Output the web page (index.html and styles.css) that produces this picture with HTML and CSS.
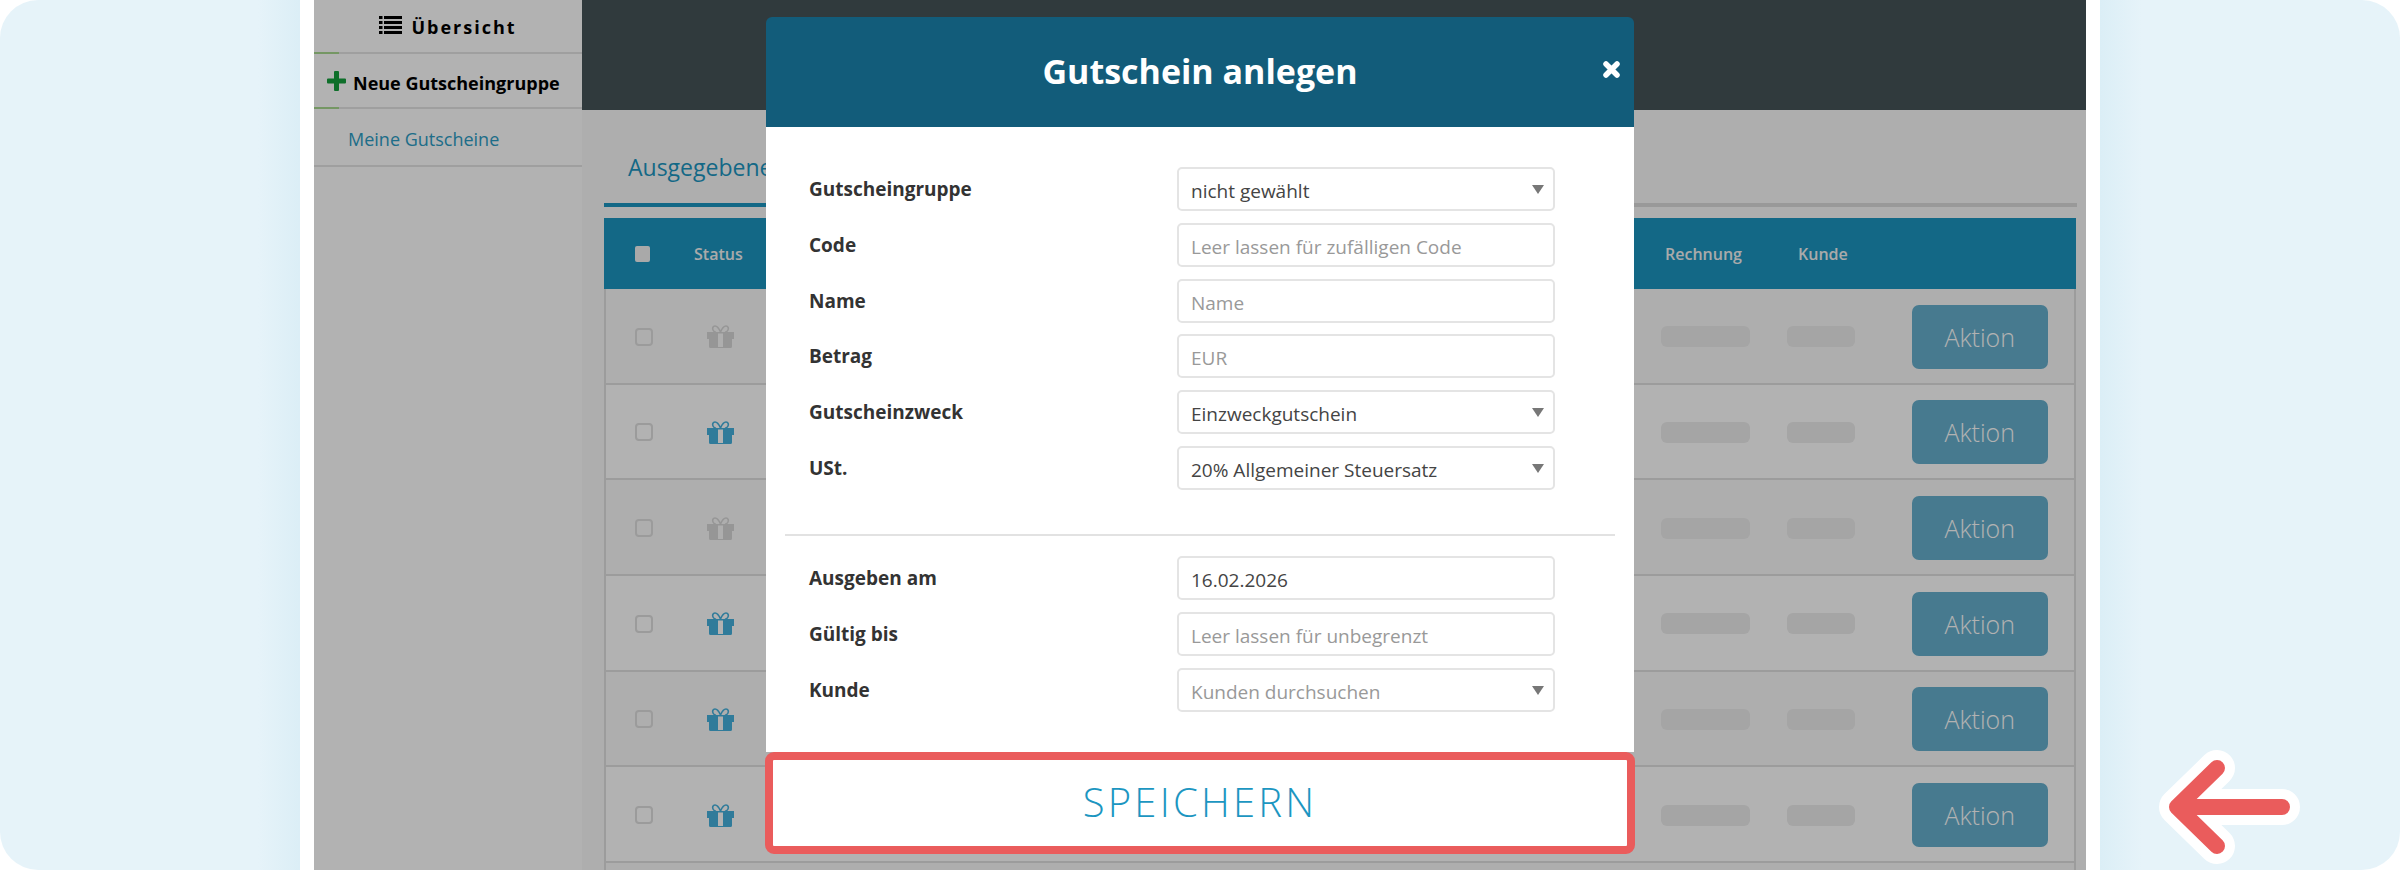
FILE: index.html
```html
<!DOCTYPE html>
<html lang="de">
<head>
    <meta charset="UTF-8">
    <title>Gutschein anlegen</title>
    <link rel="stylesheet" href="styles.css">
</head>
<body>

    <svg class="defs" width="0" height="0">
        <symbol id="gift" viewBox="0 0 27 23">
            <path fill-rule="evenodd" d="M0 7h27v7h-2v7.500a1.500 1.500 0 0 1-1.500 1.500h-20A1.500 1.500 0 0 1 2 21.500V14H0zM11 8.500V22h5V8.500z" fill="currentColor"/>
            <path d="M13.500 7C12 3.500 10 1 8 1 5.800 1 5.200 3.200 6 5c.6 1.300 1.800 2 3 2.300M13.500 7C15 3.500 17 1 19 1c2.200 0 2.800 2.200 2 4-.6 1.300-1.800 2-3 2.300" fill="none" stroke="currentColor" stroke-width="1.600"/>
        </symbol>
    </svg>

    <div class="side-panel side-left"></div>

    <div class="frame">
        <aside class="sidebar">
            <div class="side-head">
                <svg class="list-icon" viewBox="0 0 23 18"><path d="M0 0h3.500v3H0zM5 0h18v3H5zM0 5h3.500v3H0zM5 5h18v3H5zM0 10h3.500v3H0zM5 10h18v3H5zM0 15h3.500v3H0zM5 15h18v3H5z" fill="currentColor"/></svg>
                <span>Übersicht</span>
            </div>
            <div class="side-new">
                <svg class="plus-icon" viewBox="0 0 19 20"><path d="M7 1a1 1 0 0 1 1-1h3a1 1 0 0 1 1 1v6.500h6a1 1 0 0 1 1 1v3a1 1 0 0 1-1 1h-6V19a1 1 0 0 1-1 1H8a1 1 0 0 1-1-1v-6.500H1a1 1 0 0 1-1-1v-3a1 1 0 0 1 1-1h6z" fill="currentColor"/></svg>
                <span>Neue Gutscheingruppe</span>
            </div>
            <div class="side-link">Meine Gutscheine</div>
        </aside>

        <main class="content">
            <div class="topbar"></div>
            <div class="inner">
                <div class="tabs">
                    <div class="tab">Ausgegebene</div>
                </div>
                <div class="table">
                    <div class="row table-head">
                        <div class="cell-check"><span class="check-all"></span></div>
                        <div>Status</div>
                        <div class="th-invoice">Rechnung</div>
                        <div class="th-customer">Kunde</div>
                        <div></div>
                    </div>
                    <div class="row">
                        <div class="cell-check"><span class="check"></span></div>
                        <div><svg class="gift gift-off"><use href="#gift"/></svg></div>
                        <div><span class="pill pill-wide"></span></div>
                        <div><span class="pill"></span></div>
                        <div class="action-btn">Aktion</div>
                    </div>
                    <div class="row">
                        <div class="cell-check"><span class="check"></span></div>
                        <div><svg class="gift"><use href="#gift"/></svg></div>
                        <div><span class="pill pill-wide"></span></div>
                        <div><span class="pill"></span></div>
                        <div class="action-btn">Aktion</div>
                    </div>
                    <div class="row">
                        <div class="cell-check"><span class="check"></span></div>
                        <div><svg class="gift gift-off"><use href="#gift"/></svg></div>
                        <div><span class="pill pill-wide"></span></div>
                        <div><span class="pill"></span></div>
                        <div class="action-btn">Aktion</div>
                    </div>
                    <div class="row">
                        <div class="cell-check"><span class="check"></span></div>
                        <div><svg class="gift"><use href="#gift"/></svg></div>
                        <div><span class="pill pill-wide"></span></div>
                        <div><span class="pill"></span></div>
                        <div class="action-btn">Aktion</div>
                    </div>
                    <div class="row">
                        <div class="cell-check"><span class="check"></span></div>
                        <div><svg class="gift"><use href="#gift"/></svg></div>
                        <div><span class="pill pill-wide"></span></div>
                        <div><span class="pill"></span></div>
                        <div class="action-btn">Aktion</div>
                    </div>
                    <div class="row">
                        <div class="cell-check"><span class="check"></span></div>
                        <div><svg class="gift"><use href="#gift"/></svg></div>
                        <div><span class="pill pill-wide"></span></div>
                        <div><span class="pill"></span></div>
                        <div class="action-btn">Aktion</div>
                    </div>
                </div>
            </div>
        </main>

        <!-- Dimmed layer and dialog -->
        <div class="overlay">
            <div class="modal">
                <div class="modal-head">
                    <h2>Gutschein anlegen</h2>
                    <svg class="close-icon" viewBox="0 0 17 17"><path d="M3 3l11 11M14 3L3 14" stroke="currentColor" stroke-width="5.500" stroke-linecap="round"/></svg>
                </div>
                <div class="modal-body">
                    <div class="form-group">
                        <div class="form-row">
                            <label>Gutscheingruppe</label>
                            <div class="field field-select">nicht gewählt</div>
                        </div>
                        <div class="form-row">
                            <label>Code</label>
                            <div class="field field-hint">Leer lassen für zufälligen Code</div>
                        </div>
                        <div class="form-row">
                            <label>Name</label>
                            <div class="field field-hint">Name</div>
                        </div>
                        <div class="form-row">
                            <label>Betrag</label>
                            <div class="field field-hint">EUR</div>
                        </div>
                        <div class="form-row">
                            <label>Gutscheinzweck</label>
                            <div class="field field-select">Einzweckgutschein</div>
                        </div>
                        <div class="form-row">
                            <label>USt.</label>
                            <div class="field field-select">20% Allgemeiner Steuersatz</div>
                        </div>
                    </div>
                    <hr class="divider">
                    <div class="form-group">
                        <div class="form-row">
                            <label>Ausgeben am</label>
                            <div class="field">16.02.2026</div>
                        </div>
                        <div class="form-row">
                            <label>Gültig bis</label>
                            <div class="field field-hint">Leer lassen für unbegrenzt</div>
                        </div>
                        <div class="form-row">
                            <label>Kunde</label>
                            <div class="field field-hint field-select">Kunden durchsuchen</div>
                        </div>
                    </div>
                </div>
                <button class="save-btn">SPEICHERN</button>
            </div>
        </div>
    </div>

    <div class="side-panel side-right">
        <svg class="arrow" viewBox="0 0 160 130" width="160" height="130">
            <path class="arrow-halo" d="M132 57H27M67 18L27 57l40 39"/>
            <path class="arrow-line" d="M132 57H27M67 18L27 57l40 39"/>
        </svg>
    </div>

</body>
</html>
```

FILE: styles.css
```css
/* General Styles */
* {
    box-sizing: border-box;
}

body {
    margin: 0;
    width: 2400px;
    height: 870px;
    overflow: hidden;
    display: flex;
    background-color: #fff;
    font-family: "Open Sans", "Liberation Sans", sans-serif;
}

.defs {
    position: absolute;
}

/* Light panels left and right */
.side-panel {
    position: relative;
    width: 300px;
    height: 870px;
}

.side-left {
    background: linear-gradient(to right, #e6f3f9 86%, #dbeef6);
    border-radius: 38px 0 0 38px;
}

.side-right {
    background: linear-gradient(to left, #e6f3f9 86%, #dbeef6);
    border-radius: 0 38px 38px 0;
}

.arrow {
    position: absolute;
    left: 50px;
    top: 750px;
}

.arrow path {
    fill: none;
    stroke-linecap: round;
    stroke-linejoin: round;
}

.arrow-halo {
    stroke: #fff;
    stroke-width: 36;
}

.arrow-line {
    stroke: #ea5c5c;
    stroke-width: 16;
}

/* App frame */
.frame {
    position: relative;
    width: 1800px;
    height: 870px;
    padding: 0 14px;
    display: flex;
    overflow: hidden;
}

.sidebar {
    width: 268px;
    flex-shrink: 0;
    background-color: #fff;
}

.side-head {
    height: 54px;
    padding-top: 2px;
    display: flex;
    align-items: center;
    justify-content: center;
    gap: 9px;
    border-bottom: 2px solid #e4e4e4;
    font-size: 18px;
    font-weight: 700;
    letter-spacing: 2px;
    color: #000;
}

.list-icon {
    width: 23px;
    height: 18px;
    margin-bottom: 4px;
}

.side-new {
    height: 55px;
    padding: 4px 0 0 13px;
    display: flex;
    align-items: center;
    gap: 7px;
    border-bottom: 2px solid #e4e4e4;
    font-size: 18px;
    font-weight: 700;
    color: #000;
}

.side-head, .side-new {
    position: relative;
}

.side-head::after, .side-new::after {
    content: "";
    position: absolute;
    left: 0;
    bottom: -2px;
    width: 25px;
    height: 2px;
    background-color: #a8d890;
}

.plus-icon {
    width: 19px;
    height: 20px;
    margin-top: -4px;
    color: #15a03d;
}

.side-link {
    height: 58px;
    padding: 3px 0 0 34px;
    display: flex;
    align-items: center;
    border-bottom: 2px solid #e4e4e4;
    font-size: 18px;
    color: #2b9cc4;
}

.content {
    flex: 1;
    background-color: #fafafa;
}

.topbar {
    height: 110px;
    background-color: #465358;
}

.inner {
    padding: 0 9px 0 22px;
}

/* Tabs */
.tabs {
    height: 97px;
    border-bottom: 4px solid #dcdcdc;
    display: flex;
    margin-bottom: 11px;
}

.tab {
    width: 300px;
    height: 97px;
    padding: 41px 0 0 24px;
    border-bottom: 4px solid #1c96c1;
    font-size: 23px;
    line-height: 32px;
    color: #1c96c1;
}

/* Table */
.table {
    width: 1472px;
    min-height: 700px;
    border-left: 2px solid #e0e0e0;
    border-right: 2px solid #e0e0e0;
}

.row {
    height: 95.67px;
    padding: 2px 26.5px 0 0;
    display: grid;
    grid-template-columns: 88px 1fr 126px 125px 135.5px;
    align-items: center;
    border-bottom: 2px solid #e0e0e0;
    background-color: #fafafa;
}

.row:nth-child(odd) {
    background-color: #fff;
}

.table-head {
    height: 71px;
    margin: 0 -2px;
    padding: 0 28.5px 0 0;
    grid-template-columns: 90px 1fr 126px 125px 135.5px;
    border-bottom: none;
    background: #1c96c1 !important;
    font-size: 16px;
    font-weight: 600;
    color: #f4f4f4;
}

.cell-check {
    padding-left: 29px;
    display: flex;
}

.check {
    width: 18px;
    height: 18px;
    border: 2px solid #dedede;
    border-radius: 4px;
}

.check-all {
    width: 15px;
    height: 16px;
    border-radius: 2px;
    background-color: #f2f2f2;
}

.table-head .cell-check {
    padding-left: 31px;
}

.th-invoice {
    padding-left: 4px;
}

.th-customer {
    padding-left: 11px;
}

.gift {
    display: block;
    width: 27px;
    height: 23px;
    margin-left: 13px;
    color: #45b1dd;
}

.gift-off {
    color: #d7d7d7;
}

.pill {
    display: block;
    width: 68px;
    height: 21px;
    border-radius: 6px;
    background-color: #ececec;
}

.pill-wide {
    width: 89px;
}

.action-btn {
    height: 64px;
    display: flex;
    align-items: center;
    justify-content: center;
    border-radius: 7px;
    background-color: #66afcd;
    font-size: 25px;
    font-weight: 300;
    color: #fff;
}

/* Dialog */
.overlay {
    position: absolute;
    left: 14px;
    right: 14px;
    top: 0;
    bottom: 0;
    display: flex;
    justify-content: center;
    align-items: flex-start;
    padding-top: 17px;
    background-color: rgba(0, 0, 0, 0.3);
}

.modal {
    width: 868px;
    border-radius: 6px;
}

.modal-head {
    position: relative;
    height: 110px;
    padding-bottom: 3px;
    display: flex;
    align-items: center;
    justify-content: center;
    border-radius: 6px 6px 0 0;
    background-color: #125c7a;
}

.modal-head h2 {
    margin: 0;
    font-size: 34px;
    font-weight: 700;
    color: #fff;
}

.close-icon {
    position: absolute;
    right: 14px;
    top: 44px;
    width: 17px;
    height: 17px;
    color: #fff;
}

.modal-body {
    padding: 40px 19px;
    background-color: #fff;
}

.form-group {
    display: flex;
    flex-direction: column;
    gap: 11.8px;
    padding-left: 24px;
}

.form-row {
    display: flex;
    align-items: center;
    height: 44px;
}

.form-row label {
    width: 368px;
    font-size: 19px;
    font-weight: 700;
    color: #333;
}

.field {
    position: relative;
    width: 378px;
    height: 44px;
    padding: 4px 12px 0;
    display: flex;
    align-items: center;
    border: 2px solid #e4e4e4;
    border-radius: 5px;
    font-size: 19px;
    color: #444;
}

.field-hint {
    color: #999;
}

.field-select::after {
    content: "";
    position: absolute;
    right: 9px;
    top: 16px;
    border-left: 6px solid transparent;
    border-right: 6px solid transparent;
    border-top: 9px solid #777;
}

.divider {
    height: 2px;
    margin: 44px 0 20px;
    border: none;
    background-color: #e2e2e2;
}

.save-btn {
    display: block;
    width: 870px;
    height: 102px;
    margin: 0 -1px;
    padding-bottom: 3px;
    border: 8px solid #ea5c5c;
    border-radius: 9px;
    background-color: #fff;
    font-family: inherit;
    font-size: 40px;
    font-weight: 300;
    letter-spacing: 3.2px;
    color: #1c96c1;
}
```
